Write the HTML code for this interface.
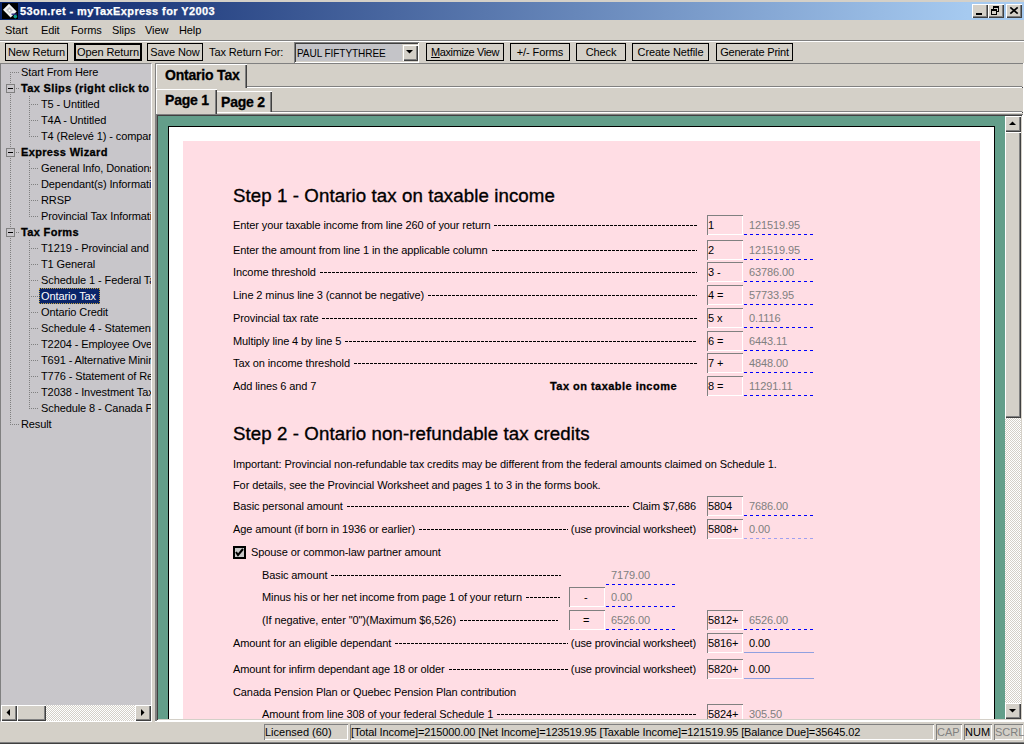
<!DOCTYPE html><html><head><meta charset="utf-8"><style>
html,body{margin:0;padding:0}
body{width:1024px;height:744px;overflow:hidden;position:relative;background:#D4D0C8;font-family:"Liberation Sans",sans-serif;font-size:11px;color:#000}
div{position:absolute;box-sizing:border-box}
.t{white-space:nowrap;line-height:13px;font-size:11px;letter-spacing:-0.1px}
.b{font-weight:bold;letter-spacing:0.35px;-webkit-text-stroke:0.3px #000}
</style></head><body>
<div style="left:0px;top:2px;width:1024px;height:18px;background:linear-gradient(to right,#0A246A 0,#A6CAF0 968px)"></div>
<div style="left:2px;top:3px;width:16px;height:16px;background:#000">
<svg width="16" height="16" viewBox="0 0 16 16" style="position:absolute;left:0;top:0">
<path d="M7 0.8 L14.6 8.4 L8.6 14.4 L1 6.8 Z" fill="#F2F2F2"/>
<path d="M4 7 L7.5 3.8 L11 7.2 L7.8 10.6 Z" fill="#C8C8C8"/>
<circle cx="7.5" cy="7.5" r="1" fill="#fff"/>
<path d="M9.5 11.2 L14.8 11.2" stroke="#2A2A80" stroke-width="1.4"/>
<circle cx="13.3" cy="13.6" r="1.8" fill="#10A090"/>
</svg></div>
<div class="t" style="left:20px;top:5px;color:#fff;font-weight:bold;letter-spacing:0.4px;-webkit-text-stroke:0.25px #fff">53on.ret - myTaxExpress for Y2003</div>
<div style="left:972px;top:4px;width:16px;height:14px;background:#D4D0C8;box-shadow:inset 1px 1px 0 #fff, inset -1px -1px 0 #404040, inset -2px -2px 0 #808080"></div>
<div style="left:988px;top:4px;width:16px;height:14px;background:#D4D0C8;box-shadow:inset 1px 1px 0 #fff, inset -1px -1px 0 #404040, inset -2px -2px 0 #808080"></div>
<div style="left:1006px;top:4px;width:16px;height:14px;background:#D4D0C8;box-shadow:inset 1px 1px 0 #fff, inset -1px -1px 0 #404040, inset -2px -2px 0 #808080"></div>
<div style="left:976px;top:13px;width:6px;height:2px;background:#000"></div>
<svg width="16" height="14" style="position:absolute;left:988px;top:4px">
<rect x="5.5" y="2.5" width="5" height="5" fill="none" stroke="#000"/><rect x="5" y="2" width="6" height="2" fill="#000"/>
<rect x="3.5" y="5.5" width="5" height="5" fill="#D4D0C8" stroke="#000"/><rect x="3" y="5" width="6" height="2" fill="#000"/>
</svg>
<svg width="16" height="14" style="position:absolute;left:1006px;top:4px">
<path d="M4.3 3.3 L11.7 9.7 M11.7 3.3 L4.3 9.7" stroke="#000" stroke-width="1.7"/>
</svg>
<div class="t" style="left:5px;top:24px;">Start</div>
<div class="t" style="left:41px;top:24px;">Edit</div>
<div class="t" style="left:71px;top:24px;">Forms</div>
<div class="t" style="left:112px;top:24px;">Slips</div>
<div class="t" style="left:145px;top:24px;">View</div>
<div class="t" style="left:179px;top:24px;">Help</div>
<div style="left:0px;top:40px;width:1024px;height:1px;background:#808080"></div>
<div style="left:0px;top:41px;width:1024px;height:1px;background:#fff"></div>
<div style="left:5px;top:43px;width:63px;height:18px;border:1px solid #000;background:#D4D0C8"></div>
<div class="t" style="left:5px;top:46px;width:63px;text-align:center;letter-spacing:-0.1px">New Return</div>
<div style="left:74px;top:43px;width:68px;height:18px;border:2px solid #000;background:#D4D0C8"></div>
<div class="t" style="left:74px;top:46px;width:68px;text-align:center;letter-spacing:-0.1px">Open Return</div>
<div style="left:147px;top:43px;width:56px;height:18px;border:1px solid #000;background:#D4D0C8"></div>
<div class="t" style="left:147px;top:46px;width:56px;text-align:center;letter-spacing:-0.1px">Save Now</div>
<div class="t" style="left:209px;top:46px;">Tax Return For:</div>
<div style="left:294px;top:42px;width:125px;height:21px;background:#C4C4C8;box-shadow:inset 1px 1px 0 #808080, inset -1px -1px 0 #fff, inset 2px 2px 0 #404040, inset -2px -2px 0 #D4D0C8"></div>
<div class="t" style="left:297px;top:47px;transform:scaleX(0.915);transform-origin:0 0">PAUL FIFTYTHREE</div>
<div style="left:402px;top:44px;width:16px;height:17px;background:#D4D0C8;box-shadow:inset 1px 1px 0 #D4D0C8, inset 2px 2px 0 #fff, inset -1px -1px 0 #404040, inset -2px -2px 0 #808080"></div>
<svg width="16" height="17" style="position:absolute;left:402px;top:44px"><path d="M4 6 L11 6 L7.5 9.5 Z" fill="#000"/></svg>
<div style="left:426px;top:43px;width:78px;height:18px;border:1px solid #000;background:#D4D0C8"></div>
<div class="t" style="left:426px;top:46px;width:78px;text-align:center;letter-spacing:-0.4px"><u>M</u>aximize View</div>
<div style="left:510px;top:43px;width:60px;height:18px;border:1px solid #000;background:#D4D0C8"></div>
<div class="t" style="left:510px;top:46px;width:60px;text-align:center;letter-spacing:-0.1px">+/- Forms</div>
<div style="left:576px;top:43px;width:50px;height:18px;border:1px solid #000;background:#D4D0C8"></div>
<div class="t" style="left:576px;top:46px;width:50px;text-align:center;letter-spacing:-0.1px">Check</div>
<div style="left:632px;top:43px;width:77px;height:18px;border:1px solid #000;background:#D4D0C8"></div>
<div class="t" style="left:632px;top:46px;width:77px;text-align:center;letter-spacing:-0.1px">Create Netfile</div>
<div style="left:716px;top:43px;width:77px;height:18px;border:1px solid #000;background:#D4D0C8"></div>
<div class="t" style="left:716px;top:46px;width:77px;text-align:center;letter-spacing:-0.2px">Generate Print</div>
<div style="left:0;top:63px;width:152px;height:659px;background:#C8C6CA;border-top:1px solid #808080;border-left:1px solid #808080;border-right:1px solid #fff;border-bottom:1px solid #fff"></div>
<div style="left:1px;top:64px;width:150px;height:641px;overflow:hidden">
<div style="left:9px;top:8px;width:1px;height:353px;background:repeating-linear-gradient(to bottom,#808080 0 1px,transparent 1px 2px)"></div>
<div style="left:28px;top:32px;width:1px;height:41px;background:repeating-linear-gradient(to bottom,#808080 0 1px,transparent 1px 2px)"></div>
<div style="left:28px;top:96px;width:1px;height:57px;background:repeating-linear-gradient(to bottom,#808080 0 1px,transparent 1px 2px)"></div>
<div style="left:28px;top:176px;width:1px;height:169px;background:repeating-linear-gradient(to bottom,#808080 0 1px,transparent 1px 2px)"></div>
<div style="left:9px;top:8px;width:9px;height:1px;background:repeating-linear-gradient(to right,#808080 0 1px,transparent 1px 2px)"></div>
<div class="t" style="left:20px;top:2px">Start From Here</div>
<div style="left:5px;top:20px;width:9px;height:9px;border:1px solid #808080;background:#C8C6CA"></div>
<div style="left:7px;top:24px;width:5px;height:1px;background:#000"></div>
<div style="left:15px;top:24px;width:3px;height:1px;background:repeating-linear-gradient(to right,#808080 0 1px,transparent 1px 2px)"></div>
<div class="t b" style="left:20px;top:18px">Tax Slips (right click to add)</div>
<div style="left:30px;top:40px;width:7px;height:1px;background:repeating-linear-gradient(to right,#808080 0 1px,transparent 1px 2px)"></div>
<div class="t" style="left:40px;top:34px">T5 - Untitled</div>
<div style="left:30px;top:56px;width:7px;height:1px;background:repeating-linear-gradient(to right,#808080 0 1px,transparent 1px 2px)"></div>
<div class="t" style="left:40px;top:50px">T4A - Untitled</div>
<div style="left:30px;top:72px;width:7px;height:1px;background:repeating-linear-gradient(to right,#808080 0 1px,transparent 1px 2px)"></div>
<div class="t" style="left:40px;top:66px">T4 (Relev&eacute; 1) - company</div>
<div style="left:5px;top:84px;width:9px;height:9px;border:1px solid #808080;background:#C8C6CA"></div>
<div style="left:7px;top:88px;width:5px;height:1px;background:#000"></div>
<div style="left:15px;top:88px;width:3px;height:1px;background:repeating-linear-gradient(to right,#808080 0 1px,transparent 1px 2px)"></div>
<div class="t b" style="left:20px;top:82px">Express Wizard</div>
<div style="left:30px;top:104px;width:7px;height:1px;background:repeating-linear-gradient(to right,#808080 0 1px,transparent 1px 2px)"></div>
<div class="t" style="left:40px;top:98px">General Info, Donations</div>
<div style="left:30px;top:120px;width:7px;height:1px;background:repeating-linear-gradient(to right,#808080 0 1px,transparent 1px 2px)"></div>
<div class="t" style="left:40px;top:114px">Dependant(s) Information</div>
<div style="left:30px;top:136px;width:7px;height:1px;background:repeating-linear-gradient(to right,#808080 0 1px,transparent 1px 2px)"></div>
<div class="t" style="left:40px;top:130px">RRSP</div>
<div style="left:30px;top:152px;width:7px;height:1px;background:repeating-linear-gradient(to right,#808080 0 1px,transparent 1px 2px)"></div>
<div class="t" style="left:40px;top:146px">Provincial Tax Information</div>
<div style="left:5px;top:164px;width:9px;height:9px;border:1px solid #808080;background:#C8C6CA"></div>
<div style="left:7px;top:168px;width:5px;height:1px;background:#000"></div>
<div style="left:15px;top:168px;width:3px;height:1px;background:repeating-linear-gradient(to right,#808080 0 1px,transparent 1px 2px)"></div>
<div class="t b" style="left:20px;top:162px">Tax Forms</div>
<div style="left:30px;top:184px;width:7px;height:1px;background:repeating-linear-gradient(to right,#808080 0 1px,transparent 1px 2px)"></div>
<div class="t" style="left:40px;top:178px">T1219 - Provincial and Territorial</div>
<div style="left:30px;top:200px;width:7px;height:1px;background:repeating-linear-gradient(to right,#808080 0 1px,transparent 1px 2px)"></div>
<div class="t" style="left:40px;top:194px">T1 General</div>
<div style="left:30px;top:216px;width:7px;height:1px;background:repeating-linear-gradient(to right,#808080 0 1px,transparent 1px 2px)"></div>
<div class="t" style="left:40px;top:210px">Schedule 1 - Federal Tax</div>
<div style="left:30px;top:232px;width:7px;height:1px;background:repeating-linear-gradient(to right,#808080 0 1px,transparent 1px 2px)"></div>
<div style="left:38px;top:224px;width:61px;height:16px;background:#0A246A;border:1px dotted #C0A040"></div>
<div class="t" style="left:40px;top:226px;color:#fff">Ontario Tax</div>
<div style="left:30px;top:248px;width:7px;height:1px;background:repeating-linear-gradient(to right,#808080 0 1px,transparent 1px 2px)"></div>
<div class="t" style="left:40px;top:242px">Ontario Credit</div>
<div style="left:30px;top:264px;width:7px;height:1px;background:repeating-linear-gradient(to right,#808080 0 1px,transparent 1px 2px)"></div>
<div class="t" style="left:40px;top:258px">Schedule 4 - Statement of Investment</div>
<div style="left:30px;top:280px;width:7px;height:1px;background:repeating-linear-gradient(to right,#808080 0 1px,transparent 1px 2px)"></div>
<div class="t" style="left:40px;top:274px">T2204 - Employee Overpayment</div>
<div style="left:30px;top:296px;width:7px;height:1px;background:repeating-linear-gradient(to right,#808080 0 1px,transparent 1px 2px)"></div>
<div class="t" style="left:40px;top:290px">T691 - Alternative Minimum Tax</div>
<div style="left:30px;top:312px;width:7px;height:1px;background:repeating-linear-gradient(to right,#808080 0 1px,transparent 1px 2px)"></div>
<div class="t" style="left:40px;top:306px">T776 - Statement of Real Estate</div>
<div style="left:30px;top:328px;width:7px;height:1px;background:repeating-linear-gradient(to right,#808080 0 1px,transparent 1px 2px)"></div>
<div class="t" style="left:40px;top:322px">T2038 - Investment Tax Credit</div>
<div style="left:30px;top:344px;width:7px;height:1px;background:repeating-linear-gradient(to right,#808080 0 1px,transparent 1px 2px)"></div>
<div class="t" style="left:40px;top:338px">Schedule 8 - Canada Pension Plan</div>
<div style="left:9px;top:360px;width:9px;height:1px;background:repeating-linear-gradient(to right,#808080 0 1px,transparent 1px 2px)"></div>
<div class="t" style="left:20px;top:354px">Result</div>
</div>
<div style="left:1px;top:705px;width:150px;height:16px;background:repeating-conic-gradient(#D4D0C8 0 25%,#fff 0 50%) 0 0/2px 2px"></div>
<div style="left:1px;top:705px;width:16px;height:16px;background:#D4D0C8;box-shadow:inset 1px 1px 0 #fff, inset -1px -1px 0 #404040, inset -2px -2px 0 #808080"></div>
<svg width="16" height="16" style="position:absolute;left:1px;top:705px"><path d="M9 4 L9 11 L5.5 7.5 Z" fill="#000"/></svg>
<div style="left:17px;top:705px;width:29px;height:16px;background:#D4D0C8;box-shadow:inset 1px 1px 0 #fff, inset -1px -1px 0 #404040, inset -2px -2px 0 #808080"></div>
<div style="left:135px;top:705px;width:16px;height:16px;background:#D4D0C8;box-shadow:inset 1px 1px 0 #fff, inset -1px -1px 0 #404040, inset -2px -2px 0 #808080"></div>
<svg width="16" height="16" style="position:absolute;left:135px;top:705px"><path d="M6 4 L6 11 L9.5 7.5 Z" fill="#000"/></svg>
<div style="left:155px;top:63px;width:1px;height:659px;background:#808080"></div>
<div style="left:155px;top:63px;width:869px;height:1px;background:#808080"></div>
<div style="left:155px;top:721px;width:869px;height:1px;background:#fff"></div>
<div style="left:1023px;top:63px;width:1px;height:659px;background:#fff"></div>
<div style="left:246px;top:86px;width:776px;height:1px;background:#808080"></div>
<div style="left:156px;top:87px;width:866px;height:1px;background:#fff"></div>
<div style="left:1022px;top:87px;width:1px;height:1px;background:#404040"></div>
<div style="left:156px;top:64px;width:91px;height:24px;background:#D4D0C8;box-shadow:inset 1px 1px 0 #fff, inset -1px 0 0 #404040, inset -2px 0 0 #808080"></div>
<div class="t b" style="left:165px;top:69px;font-size:14px;letter-spacing:-0.2px">Ontario Tax</div>
<div style="left:156px;top:111px;width:866px;height:1px;background:#808080"></div>
<div style="left:156px;top:112px;width:866px;height:1px;background:#fff"></div>
<div style="left:1022px;top:112px;width:1px;height:1px;background:#404040"></div>
<div style="left:217px;top:91px;width:55px;height:21px;background:#D4D0C8;box-shadow:inset 0 1px 0 #fff, inset -1px 0 0 #404040, inset -2px 0 0 #808080"></div>
<div class="t b" style="left:221px;top:96px;font-size:14px;letter-spacing:-0.2px">Page 2</div>
<div style="left:156px;top:89px;width:61px;height:25px;background:#D4D0C8;box-shadow:inset 1px 1px 0 #fff, inset -1px 0 0 #404040, inset -2px 0 0 #808080"></div>
<div class="t b" style="left:165px;top:94px;font-size:14px;letter-spacing:-0.2px">Page 1</div>
<div style="left:156px;top:114px;width:867px;height:607px;background:#639E8A;box-shadow:inset 1px 1px 0 #808080, inset -1px -1px 0 #fff, inset 2px 2px 0 #404040, inset -2px -2px 0 #D4D0C8"></div>
<div style="left:1005px;top:116px;width:16px;height:603px;background:repeating-conic-gradient(#D4D0C8 0 25%,#fff 0 50%) 0 0/2px 2px"></div>
<div style="left:1005px;top:116px;width:16px;height:16px;background:#D4D0C8;box-shadow:inset 1px 1px 0 #fff, inset -1px -1px 0 #404040, inset -2px -2px 0 #808080"></div>
<svg width="16" height="16" style="position:absolute;left:1005px;top:116px"><path d="M4 9 L11 9 L7.5 5.5 Z" fill="#000"/></svg>
<div style="left:1005px;top:132px;width:16px;height:286px;background:#D4D0C8;box-shadow:inset 1px 1px 0 #fff, inset -1px -1px 0 #404040, inset -2px -2px 0 #808080"></div>
<div style="left:1005px;top:703px;width:16px;height:16px;background:#D4D0C8;box-shadow:inset 1px 1px 0 #fff, inset -1px -1px 0 #404040, inset -2px -2px 0 #808080"></div>
<svg width="16" height="16" style="position:absolute;left:1005px;top:703px"><path d="M4 6 L11 6 L7.5 9.5 Z" fill="#000"/></svg>
<div style="left:158px;top:116px;width:847px;height:603px;overflow:hidden">
<div style="left:10px;top:10px;width:827px;height:700px;background:#fff;border:1px solid #000"></div>
<div style="left:25px;top:25px;width:797px;height:700px;background:#FFDDE4"></div>
<div class="t" style="left:75px;top:73px;font-size:18.7px;letter-spacing:0.08px;-webkit-text-stroke:0.35px #000">Step 1 - Ontario tax on taxable income</div>
<div class="t" style="left:75px;top:103px;width:464px;display:flex;"><span style="padding-right:1px">Enter your taxable income from line 260 of your return&nbsp;</span><span style="flex:1;height:13px;background:repeating-linear-gradient(to right,#000 0 3px,transparent 3px 4px) 0 6px/100% 1px no-repeat"></span></div>
<div style="left:549px;top:99px;width:36px;height:20px;background:transparent;box-shadow:inset 1px 1px 0 #808080, inset -1px -1px 0 #fff"></div>
<div class="t" style="left:550px;top:103px;">1</div>
<div class="t" style="left:591px;top:103px;color:#808080">121519.95</div>
<div style="left:586px;top:118px;width:70px;height:1px;background:repeating-linear-gradient(to right,#0000FF 0 3px,transparent 3px 6px);"></div>
<div class="t" style="left:75px;top:128px;width:464px;display:flex;"><span style="padding-right:1px">Enter the amount from line 1 in the applicable column&nbsp;</span><span style="flex:1;height:13px;background:repeating-linear-gradient(to right,#000 0 3px,transparent 3px 4px) 0 6px/100% 1px no-repeat"></span></div>
<div style="left:549px;top:124px;width:36px;height:20px;background:transparent;box-shadow:inset 1px 1px 0 #808080, inset -1px -1px 0 #fff"></div>
<div class="t" style="left:550px;top:128px;">2</div>
<div class="t" style="left:591px;top:128px;color:#808080">121519.95</div>
<div style="left:586px;top:143px;width:70px;height:1px;background:repeating-linear-gradient(to right,#0000FF 0 3px,transparent 3px 6px);"></div>
<div class="t" style="left:75px;top:150px;width:464px;display:flex;"><span style="padding-right:1px">Income threshold&nbsp;</span><span style="flex:1;height:13px;background:repeating-linear-gradient(to right,#000 0 3px,transparent 3px 4px) 0 6px/100% 1px no-repeat"></span></div>
<div style="left:549px;top:146px;width:36px;height:20px;background:transparent;box-shadow:inset 1px 1px 0 #808080, inset -1px -1px 0 #fff"></div>
<div class="t" style="left:550px;top:150px;">3 -</div>
<div class="t" style="left:591px;top:150px;color:#808080">63786.00</div>
<div style="left:586px;top:165px;width:70px;height:1px;background:repeating-linear-gradient(to right,#0000FF 0 3px,transparent 3px 6px);"></div>
<div class="t" style="left:75px;top:173px;width:464px;display:flex;"><span style="padding-right:1px">Line 2 minus line 3 (cannot be negative)&nbsp;</span><span style="flex:1;height:13px;background:repeating-linear-gradient(to right,#000 0 3px,transparent 3px 4px) 0 6px/100% 1px no-repeat"></span></div>
<div style="left:549px;top:169px;width:36px;height:20px;background:transparent;box-shadow:inset 1px 1px 0 #808080, inset -1px -1px 0 #fff"></div>
<div class="t" style="left:550px;top:173px;">4 =</div>
<div class="t" style="left:591px;top:173px;color:#808080">57733.95</div>
<div style="left:586px;top:188px;width:70px;height:1px;background:repeating-linear-gradient(to right,#0000FF 0 3px,transparent 3px 6px);"></div>
<div class="t" style="left:75px;top:196px;width:464px;display:flex;"><span style="padding-right:1px">Provincial tax rate&nbsp;</span><span style="flex:1;height:13px;background:repeating-linear-gradient(to right,#000 0 3px,transparent 3px 4px) 0 6px/100% 1px no-repeat"></span></div>
<div style="left:549px;top:192px;width:36px;height:20px;background:transparent;box-shadow:inset 1px 1px 0 #808080, inset -1px -1px 0 #fff"></div>
<div class="t" style="left:550px;top:196px;">5 x</div>
<div class="t" style="left:591px;top:196px;color:#808080">0.1116</div>
<div style="left:586px;top:211px;width:70px;height:1px;background:repeating-linear-gradient(to right,#0000FF 0 3px,transparent 3px 6px);"></div>
<div class="t" style="left:75px;top:219px;width:464px;display:flex;"><span style="padding-right:1px">Multiply line 4 by line 5&nbsp;</span><span style="flex:1;height:13px;background:repeating-linear-gradient(to right,#000 0 3px,transparent 3px 4px) 0 6px/100% 1px no-repeat"></span></div>
<div style="left:549px;top:215px;width:36px;height:20px;background:transparent;box-shadow:inset 1px 1px 0 #808080, inset -1px -1px 0 #fff"></div>
<div class="t" style="left:550px;top:219px;">6 =</div>
<div class="t" style="left:591px;top:219px;color:#808080">6443.11</div>
<div style="left:586px;top:234px;width:70px;height:1px;background:repeating-linear-gradient(to right,#0000FF 0 3px,transparent 3px 6px);"></div>
<div class="t" style="left:75px;top:241px;width:464px;display:flex;"><span style="padding-right:1px">Tax on income threshold&nbsp;</span><span style="flex:1;height:13px;background:repeating-linear-gradient(to right,#000 0 3px,transparent 3px 4px) 0 6px/100% 1px no-repeat"></span></div>
<div style="left:549px;top:237px;width:36px;height:20px;background:transparent;box-shadow:inset 1px 1px 0 #808080, inset -1px -1px 0 #fff"></div>
<div class="t" style="left:550px;top:241px;">7 +</div>
<div class="t" style="left:591px;top:241px;color:#808080">4848.00</div>
<div style="left:586px;top:256px;width:70px;height:1px;background:repeating-linear-gradient(to right,#0000FF 0 3px,transparent 3px 6px);"></div>
<div class="t" style="left:75px;top:264px;">Add lines 6 and 7</div>
<div class="t b" style="left:272px;top:264px;width:247px;text-align:right;letter-spacing:0.47px">Tax on taxable income</div>
<div style="left:549px;top:260px;width:36px;height:20px;background:transparent;box-shadow:inset 1px 1px 0 #808080, inset -1px -1px 0 #fff"></div>
<div class="t" style="left:550px;top:264px;">8 =</div>
<div class="t" style="left:591px;top:264px;color:#808080">11291.11</div>
<div style="left:586px;top:279px;width:70px;height:1px;background:repeating-linear-gradient(to right,#0000FF 0 3px,transparent 3px 6px);"></div>
<div class="t" style="left:75px;top:311px;font-size:18.7px;letter-spacing:0.08px;-webkit-text-stroke:0.35px #000">Step 2 - Ontario non-refundable tax credits</div>
<div class="t" style="left:75px;top:342px;">Important: Provincial non-refundable tax credits may be different from the federal amounts claimed on Schedule 1.</div>
<div class="t" style="left:75px;top:363px;">For details, see the Provincial Worksheet and pages 1 to 3 in the forms book.</div>
<div class="t" style="left:75px;top:384px;width:463px;display:flex"><span style="padding-right:1px">Basic personal amount&nbsp;</span><span style="flex:1;height:13px;background:repeating-linear-gradient(to right,#000 0 3px,transparent 3px 4px) 0 6px/100% 1px no-repeat"></span><span>&nbsp;Claim $7,686</span></div>
<div style="left:549px;top:380px;width:36px;height:20px;background:transparent;box-shadow:inset 1px 1px 0 #808080, inset -1px -1px 0 #fff"></div>
<div class="t" style="left:550px;top:384px;">5804</div>
<div class="t" style="left:591px;top:384px;color:#808080">7686.00</div>
<div style="left:586px;top:399px;width:70px;height:1px;background:repeating-linear-gradient(to right,#0000FF 0 3px,transparent 3px 6px);"></div>
<div class="t" style="left:75px;top:407px;width:463px;display:flex"><span style="padding-right:1px">Age amount (if born in 1936 or earlier)&nbsp;</span><span style="flex:1;height:13px;background:repeating-linear-gradient(to right,#000 0 3px,transparent 3px 4px) 0 6px/100% 1px no-repeat"></span><span>&nbsp;(use provincial worksheet)</span></div>
<div style="left:549px;top:403px;width:36px;height:20px;background:transparent;box-shadow:inset 1px 1px 0 #808080, inset -1px -1px 0 #fff"></div>
<div class="t" style="left:550px;top:407px;">5808+</div>
<div class="t" style="left:591px;top:407px;color:#808080">0.00</div>
<div style="left:586px;top:422px;width:70px;height:1px;background:repeating-linear-gradient(to right,#A0A0F0 0 3px,transparent 3px 6px);"></div>
<div style="left:75px;top:430px;width:13px;height:13px;background:#C8C8C8;border:2px solid #000"></div>
<svg width="13" height="13" style="position:absolute;left:75px;top:430px"><path d="M3 6 L5 9 L10 3" stroke="#000" stroke-width="2" fill="none"/></svg>
<div class="t" style="left:93px;top:430px;">Spouse or common-law partner amount</div>
<div class="t" style="left:104px;top:453px;width:299px;display:flex;"><span style="padding-right:1px">Basic amount&nbsp;</span><span style="flex:1;height:13px;background:repeating-linear-gradient(to right,#000 0 3px,transparent 3px 4px) 0 6px/100% 1px no-repeat"></span></div>
<div class="t" style="left:453px;top:453px;color:#808080">7179.00</div>
<div style="left:448px;top:468px;width:70px;height:1px;background:repeating-linear-gradient(to right,#0000FF 0 3px,transparent 3px 6px);"></div>
<div class="t" style="left:104px;top:475px;width:298px;display:flex;"><span style="padding-right:1px">Minus his or her net income from page 1 of your return&nbsp;</span><span style="flex:1;height:13px;background:repeating-linear-gradient(to right,#000 0 3px,transparent 3px 4px) 0 6px/100% 1px no-repeat"></span></div>
<div style="left:411px;top:471px;width:36px;height:20px;background:transparent;box-shadow:inset 1px 1px 0 #808080, inset -1px -1px 0 #fff"></div>
<div class="t" style="left:412px;top:475px;"></div>
<div class="t" style="left:426px;top:475px;">-</div>
<div class="t" style="left:453px;top:475px;color:#808080">0.00</div>
<div style="left:448px;top:490px;width:70px;height:1px;background:repeating-linear-gradient(to right,#0000FF 0 3px,transparent 3px 6px);"></div>
<div class="t" style="left:104px;top:498px;width:296px;display:flex;"><span style="padding-right:1px">(If negative, enter "0")(Maximum $6,526)&nbsp;</span><span style="flex:1;height:13px;background:repeating-linear-gradient(to right,#000 0 3px,transparent 3px 4px) 0 6px/100% 1px no-repeat"></span></div>
<div style="left:411px;top:494px;width:36px;height:20px;background:transparent;box-shadow:inset 1px 1px 0 #808080, inset -1px -1px 0 #fff"></div>
<div class="t" style="left:412px;top:498px;"></div>
<div class="t" style="left:425px;top:498px;">=</div>
<div class="t" style="left:453px;top:498px;color:#808080">6526.00</div>
<div style="left:448px;top:513px;width:70px;height:1px;background:repeating-linear-gradient(to right,#0000FF 0 3px,transparent 3px 6px);"></div>
<div style="left:549px;top:494px;width:36px;height:20px;background:transparent;box-shadow:inset 1px 1px 0 #808080, inset -1px -1px 0 #fff"></div>
<div class="t" style="left:550px;top:498px;">5812+</div>
<div class="t" style="left:591px;top:498px;color:#808080">6526.00</div>
<div style="left:586px;top:513px;width:70px;height:1px;background:repeating-linear-gradient(to right,#0000FF 0 3px,transparent 3px 6px);"></div>
<div class="t" style="left:75px;top:521px;width:463px;display:flex"><span style="padding-right:1px">Amount for an eligible dependant&nbsp;</span><span style="flex:1;height:13px;background:repeating-linear-gradient(to right,#000 0 3px,transparent 3px 4px) 0 6px/100% 1px no-repeat"></span><span>&nbsp;(use provincial worksheet)</span></div>
<div style="left:549px;top:517px;width:36px;height:20px;background:transparent;box-shadow:inset 1px 1px 0 #808080, inset -1px -1px 0 #fff"></div>
<div class="t" style="left:550px;top:521px;">5816+</div>
<div class="t" style="left:591px;top:521px;">0.00</div>
<div style="left:586px;top:536px;width:70px;height:1px;background:#90A0E0;"></div>
<div class="t" style="left:75px;top:547px;width:463px;display:flex"><span style="padding-right:1px">Amount for infirm dependant age 18 or older&nbsp;</span><span style="flex:1;height:13px;background:repeating-linear-gradient(to right,#000 0 3px,transparent 3px 4px) 0 6px/100% 1px no-repeat"></span><span>&nbsp;(use provincial worksheet)</span></div>
<div style="left:549px;top:543px;width:36px;height:20px;background:transparent;box-shadow:inset 1px 1px 0 #808080, inset -1px -1px 0 #fff"></div>
<div class="t" style="left:550px;top:547px;">5820+</div>
<div class="t" style="left:591px;top:547px;">0.00</div>
<div style="left:586px;top:562px;width:70px;height:1px;background:#90A0E0;"></div>
<div class="t" style="left:75px;top:570px;">Canada Pension Plan or Quebec Pension Plan contribution</div>
<div class="t" style="left:104px;top:592px;width:435px;display:flex;"><span style="padding-right:1px">Amount from line 308 of your federal Schedule 1&nbsp;</span><span style="flex:1;height:13px;background:repeating-linear-gradient(to right,#000 0 3px,transparent 3px 4px) 0 6px/100% 1px no-repeat"></span></div>
<div style="left:549px;top:588px;width:36px;height:20px;background:transparent;box-shadow:inset 1px 1px 0 #808080, inset -1px -1px 0 #fff"></div>
<div class="t" style="left:550px;top:592px;">5824+</div>
<div class="t" style="left:591px;top:592px;color:#808080">305.50</div>
</div>
<div style="left:264px;top:724px;width:84px;height:16px;background:transparent;box-shadow:inset 1px 1px 0 #808080, inset -1px -1px 0 #fff"></div>
<div class="t" style="left:265px;top:726px;color:#000;letter-spacing:0px">Licensed (60)</div>
<div style="left:350px;top:724px;width:584px;height:16px;background:transparent;box-shadow:inset 1px 1px 0 #808080, inset -1px -1px 0 #fff"></div>
<div class="t" style="left:351px;top:726px;color:#000;letter-spacing:-0.11px">[Total Income]=215000.00 [Net Income]=123519.95 [Taxable Income]=121519.95 [Balance Due]=35645.02</div>
<div style="left:936px;top:724px;width:26px;height:16px;background:transparent;box-shadow:inset 1px 1px 0 #808080, inset -1px -1px 0 #fff"></div>
<div class="t" style="left:937px;top:726px;color:#808080;letter-spacing:0px">CAP</div>
<div style="left:964px;top:724px;width:28px;height:16px;background:transparent;box-shadow:inset 1px 1px 0 #808080, inset -1px -1px 0 #fff"></div>
<div class="t" style="left:965px;top:726px;color:#000;letter-spacing:0px">NUM</div>
<div style="left:994px;top:724px;width:29px;height:16px;background:transparent;box-shadow:inset 1px 1px 0 #808080, inset -1px -1px 0 #fff"></div>
<div class="t" style="left:995px;top:726px;color:#808080;letter-spacing:0px">SCRL</div>
<div style="left:0px;top:742px;width:1024px;height:1px;background:#808080"></div>
<div style="left:0px;top:743px;width:1024px;height:1px;background:#404040"></div>
</body></html>
